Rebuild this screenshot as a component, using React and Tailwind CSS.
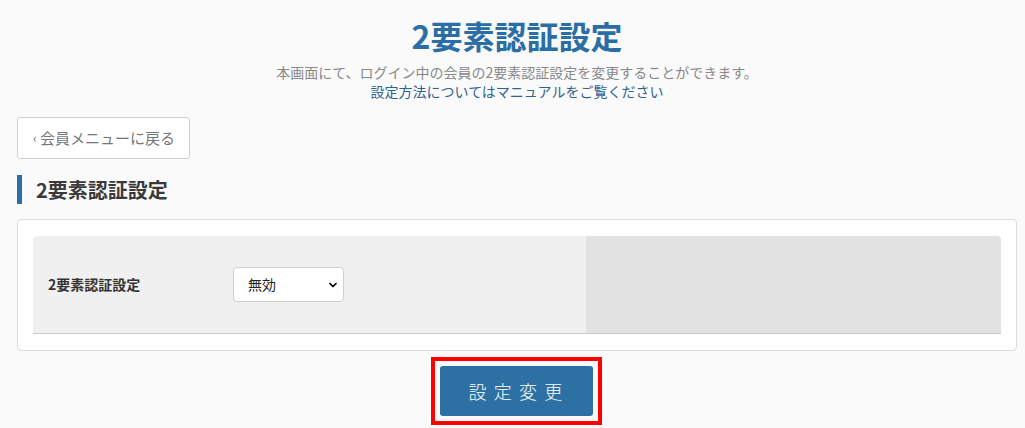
import { ChevronDown } from 'lucide-react'

const JP = { fontFamily: '"Noto Sans CJK JP", "Noto Sans", sans-serif' }

export default function App() {
  return (
    <div className="min-h-[428px] bg-[#fafafa] pl-[17px] pr-[8px] text-[#333]" style={JP}>
      {/* Page title */}
      <div className="pt-[12px] text-center">
        <h1 className="text-[32px] font-bold leading-[46px] text-[#2b6ea5]">2要素認証設定</h1>
        <p className="mt-[5px] text-[14px] leading-[19px] text-[#888]">
          本画面にて、ログイン中の会員の2要素認証設定を変更することができます。
        </p>
        <p className="text-[14px] leading-[19px] text-[#2f6290]">設定方法についてはマニュアルをご覧ください</p>
      </div>

      {/* Back */}
      <div className="mt-[16px]">
        <button className="flex h-[42px] w-[173px] items-center gap-[3px] rounded-[3px] border border-[#d0d0d0] bg-white pl-[15px] text-[15px] text-[#777]">
          <span className="text-[13px]">‹</span>
          会員メニューに戻る
        </button>
      </div>

      {/* Section heading */}
      <div className="mt-[16px] flex h-[29px] items-center border-l-[5px] border-[#2b6ea5] pl-[14px]">
        <h2 className="text-[20px] font-bold text-[#3a3a3a]">2要素認証設定</h2>
      </div>

      {/* Card */}
      <div className="mt-[15px] rounded-[4px] border border-[#dcdcdc] bg-white px-[15px] py-[16px]">
        <div className="flex h-[98px] overflow-hidden rounded-t-[4px] border-b border-[#cccccc]">
          <div className="flex w-[553px] items-center bg-[#f0f0f0] pl-[15px]">
            <span className="w-[185px] text-[14px] font-bold text-[#333]">2要素認証設定</span>
            <div className="relative">
              <select
                defaultValue="off"
                className="h-[35px] w-[111px] appearance-none rounded-[4px] border border-[#cfcfcf] bg-white pl-[14px] text-[14px] text-[#222] outline-none"
                style={JP}
              >
                <option value="off">無効</option>
                <option value="on">有効</option>
              </select>
              <ChevronDown size={12} strokeWidth={3.5} className="pointer-events-none absolute right-[5px] top-[12px] text-black" />
            </div>
          </div>
          <div className="flex-1 bg-[#e2e2e2]" />
        </div>
      </div>

      {/* Submit */}
      <div className="mt-[6px] flex justify-center pr-[2px]">
        <div className="border-4 border-[#ff0000] p-[5px]">
          <button className="flex h-[50px] w-[153px] items-center justify-center rounded-[3px] bg-[#2d70a4] pl-[6px] text-[18px] font-light tracking-[0.4em] text-white">
            設定変更
          </button>
        </div>
      </div>
    </div>
  )
}
